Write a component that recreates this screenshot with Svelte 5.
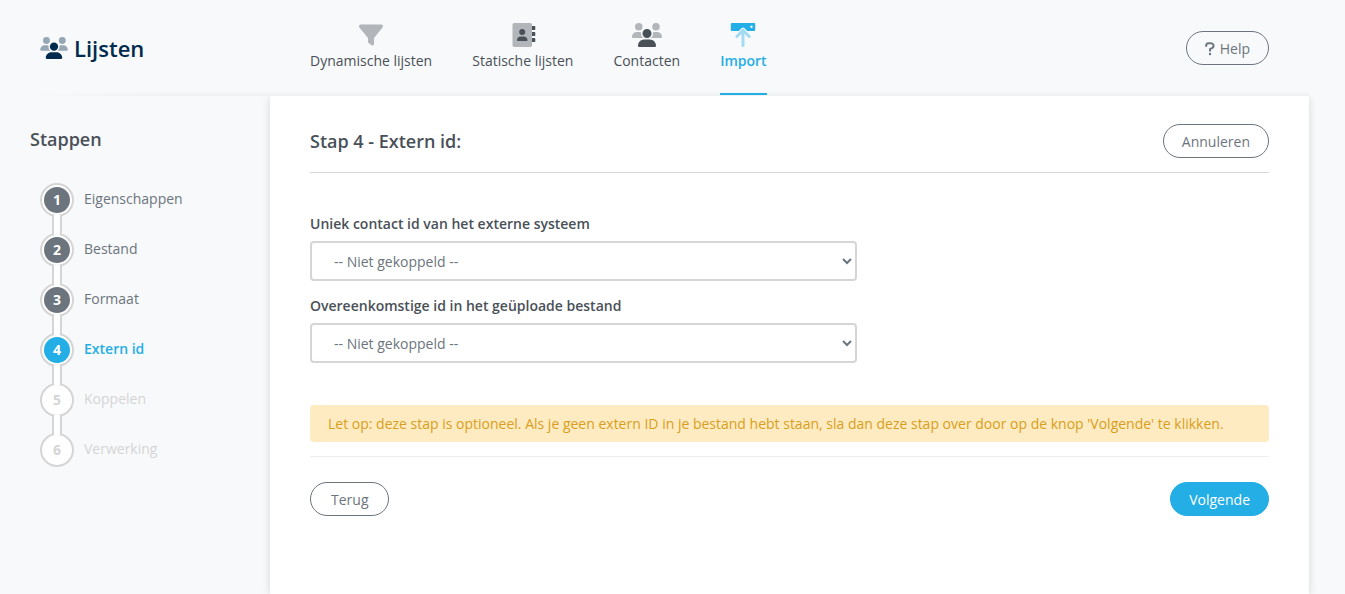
<script>
  const nav = [
    { label: 'Dynamische lijsten', icon: 'filter' },
    { label: 'Statische lijsten', icon: 'book' },
    { label: 'Contacten', icon: 'users' },
    { label: 'Import', icon: 'import', active: true },
  ];

  const steps = [
    { label: 'Eigenschappen', state: 'done' },
    { label: 'Bestand', state: 'done' },
    { label: 'Formaat', state: 'done' },
    { label: 'Extern id', state: 'current' },
    { label: 'Koppelen', state: 'todo' },
    { label: 'Verwerking', state: 'todo' },
  ];

  const fields = [
    { id: 'contact-id', label: 'Uniek contact id van het externe systeem' },
    { id: 'file-id', label: 'Overeenkomstige id in het geüploade bestand' },
  ];
</script>

{#snippet usersIcon()}
  <svg class="users" viewBox="0 0 640 512" aria-hidden="true">
    <path class="secondary" d="M144 0a80 80 0 1 1 0 160A80 80 0 1 1 144 0zM512 0a80 80 0 1 1 0 160A80 80 0 1 1 512 0zM0 298.7C0 239.8 47.8 192 106.7 192h42.7c15.9 0 31 3.5 44.6 9.7c-1.3 7.2-1.9 14.7-1.9 22.3c0 38.2 16.8 72.5 43.3 96H21.3C9.6 320 0 310.4 0 298.7zM405.3 320c26-23.5 42.7-57.8 42.7-96c0-7.6-.7-15-1.9-22.3c13.6-6.3 28.7-9.7 44.6-9.7h42.7C592.2 192 640 239.8 640 298.7c0 11.8-9.6 21.3-21.3 21.3H405.3z" />
    <path d="M224 224a96 96 0 1 1 192 0 96 96 0 1 1-192 0zM128 485.3C128 411.7 187.7 352 261.3 352H378.7C452.3 352 512 411.7 512 485.3c0 14.7-11.9 26.7-26.7 26.7H154.7c-14.7 0-26.7-11.9-26.7-26.7z" />
  </svg>
{/snippet}

<div class="page">
  <header>
    <h1>{@render usersIcon()}Lijsten</h1>
    <nav>
      {#each nav as item}
        <a href="#{item.icon}" class:active={item.active}>
          {#if item.icon === 'filter'}
            <svg viewBox="0 0 512 512" aria-hidden="true">
              <path class="secondary" d="M3.9 54.9C10.5 40.9 24.5 32 40 32H472c15.5 0 29.5 8.9 36.1 22.9s4.6 30.5-5.2 42.5L320 320.9V448c0 12.1-6.8 23.2-17.7 28.6s-23.8 4.3-33.5-3l-64-48c-8.1-6-12.8-15.5-12.8-25.6V320.9L9 97.3C-.7 85.4-2.8 68.8 3.9 54.9z" />
            </svg>
          {:else if item.icon === 'book'}
            <svg viewBox="0 0 24 24" aria-hidden="true">
              <rect class="secondary" x="1.5" y="0" width="19.5" height="24" rx="1.8" />
              <circle cx="11.2" cy="9" r="3" />
              <path d="M6 17.2a4 4 0 0 1 4-3.7h2.500a4 4 0 0 1 4 3.700a.8.8 0 0 1-.8.8H6.800a.8.8 0 0 1-.8-.8z" />
              <path d="M21 3h2.500a.8.8 0 0 1 .8.8v2.400a.8.8 0 0 1-.8.8H21zM21 9h2.500a.8.8 0 0 1 .8.8v2.400a.8.8 0 0 1-.8.8H21zM21 15h2.500a.8.8 0 0 1 .8.8v2.400a.8.8 0 0 1-.8.8H21z" />
            </svg>
          {:else if item.icon === 'users'}
            {@render usersIcon()}
          {:else}
            <svg viewBox="0 0 24 24" aria-hidden="true">
              <path fill-rule="evenodd" d="M1 0h22a1.200 1.200 0 0 1 1.200 1.200v5.600A1.200 1.200 0 0 1 23 8h-6.700l-3-2.900a1.900 1.900 0 0 0-2.600 0L7.700 8H1a1.200 1.200 0 0 1-1.200-1.200V1.200A1.200 1.200 0 0 1 1 0zM20.500 2.600a1.200 1.200 0 1 0 0 2.400a1.200 1.200 0 1 0 0-2.400z" />
              <path class="secondary arrow" d="M12 22.500V7.500M5.800 13.500L12 7.200l6.200 6.300" />
            </svg>
          {/if}
          <span>{item.label}</span>
        </a>
      {/each}
    </nav>
    <button class="pill help" type="button">
      <svg viewBox="0 0 10 14" aria-hidden="true">
        <path d="M1.200 4V3.500A2.400 2.400 0 0 1 3.600 1.200h2.500a2.500 2.500 0 0 1 1.300 4.600L5 7.200v1.600" />
        <circle cx="5" cy="12" r="1.200" />
      </svg>
      Help
    </button>
  </header>

  <div class="body">
    <aside>
      <h2>Stappen</h2>
      <ol>
        {#each steps as step, i}
          <li class={step.state}>
            <span class="dot"><b>{i + 1}</b></span>
            <span>{step.label}</span>
          </li>
        {/each}
      </ol>
    </aside>

    <main>
      <div class="title">
        <h2>Stap 4 - Extern id:</h2>
        <button class="pill" type="button">Annuleren</button>
      </div>

      <form>
        {#each fields as field}
          <label for={field.id}>{field.label}</label>
          <select id={field.id}>
            <option>-- Niet gekoppeld --</option>
          </select>
        {/each}
      </form>

      <p class="alert">
        Let op: deze stap is optioneel. Als je geen extern ID in je bestand hebt staan, sla dan deze stap over door op de knop 'Volgende' te klikken.
      </p>

      <footer>
        <button class="pill" type="button">Terug</button>
        <button class="pill primary" type="button">Volgende</button>
      </footer>
    </main>
  </div>
</div>

<style>
  :global(body) {
    margin: 0;
    background: #f8f9fb;
  }

  .page {
    display: flex;
    flex-direction: column;
    min-height: 100vh;
    overflow: hidden;
    box-sizing: border-box;
    padding-right: 36px;
    background: #f8f9fb;
    color: #495057;
    font: 14px/20px 'Open Sans', sans-serif;
  }

  h1,
  h2,
  p,
  ol {
    margin: 0;
    padding: 0;
  }

  svg {
    fill: currentColor;
  }

  .secondary {
    opacity: 0.4;
  }

  header {
    display: flex;
    box-sizing: border-box;
    height: 96px;
    padding-right: 40px;
    background:
      linear-gradient(to right, #f8f9fb 30px, transparent 180px),
      linear-gradient(to top, #eeeff0, #f8f9fb) 30px 100% / 100% 5px no-repeat;
  }

  h1 {
    display: flex;
    align-items: center;
    gap: 6px;
    box-sizing: border-box;
    width: 310px;
    padding-left: 40px;
    color: #002b4e;
    font-size: 22px;
    font-weight: 600;
    line-height: 98px;
  }

  h1 :global(svg.users) {
    width: 28px;
    height: 22px;
  }

  nav {
    display: flex;
    gap: 40px;
    margin-right: auto;
  }

  nav a {
    display: flex;
    flex-direction: column;
    align-items: center;
    gap: 4px;
    box-sizing: border-box;
    height: 95px;
    padding-top: 23px;
    color: #495057;
    text-decoration: none;
  }

  nav svg {
    width: 24px;
    height: 24px;
    overflow: visible;
  }

  nav svg.users {
    width: 30px;
  }

  nav a.active {
    border-bottom: 2px solid #24aee6;
    color: #24aee6;
    font-weight: 600;
  }

  .arrow {
    fill: none;
    stroke: currentColor;
    stroke-width: 3;
    stroke-linecap: round;
    stroke-linejoin: round;
  }

  .pill {
    box-sizing: border-box;
    height: 34px;
    padding: 2px 18px 0;
    border: 1px solid #6c757d;
    border-radius: 17px;
    background: transparent;
    color: #6c757d;
    font: inherit;
    cursor: pointer;
  }

  .help {
    display: flex;
    align-items: center;
    gap: 5px;
    margin-top: 31px;
  }

  .help svg {
    width: 10px;
    height: 14px;
  }

  .help path {
    fill: none;
    stroke: currentColor;
    stroke-width: 2;
    stroke-linecap: round;
    stroke-linejoin: round;
  }

  .body {
    display: flex;
    flex: 1;
  }

  aside {
    box-sizing: border-box;
    width: 270px;
    padding: 31px 30px 0;
  }

  h2 {
    color: #495057;
    font-size: 18px;
    font-weight: 600;
    line-height: 24px;
  }

  ol {
    display: flex;
    flex-direction: column;
    gap: 16px;
    margin-top: 32px;
    padding-left: 10px;
    list-style: none;
  }

  li {
    display: flex;
    gap: 10px;
    height: 34px;
    color: #6c757d;
    line-height: 32px;
  }

  .dot {
    position: relative;
    box-sizing: border-box;
    width: 34px;
    height: 34px;
    padding: 2px;
    border: 2px solid #d5d5d5;
    border-radius: 50%;
    background: #fff;
  }

  .dot b {
    display: block;
    border-radius: 50%;
    background: #6c757d;
    color: #fff;
    font-weight: 700;
    line-height: 26px;
    text-align: center;
  }

  /* Tube that opens into the circle above and the one below. */
  li:not(:last-child) .dot::after {
    content: '';
    position: absolute;
    top: 30px;
    left: 10px;
    width: 6px;
    height: 20px;
    border: solid #d5d5d5;
    border-width: 0 2px;
    background: #fff;
    z-index: 1;
  }

  .current {
    color: #24aee6;
    font-weight: 600;
  }

  .current b {
    background: #24aee6;
  }

  .todo {
    color: #d5d5d5;
  }

  .todo b {
    background: #fff;
    color: #d5d5d5;
  }

  main {
    flex: 1;
    min-width: 0;
    padding: 28px 40px 40px;
    background: #fff;
    box-shadow: 0 2px 8px rgba(0, 0, 0, 0.14);
    clip-path: inset(0 -12px);
  }

  .title {
    display: flex;
    align-items: flex-start;
    justify-content: space-between;
    padding-bottom: 14px;
    border-bottom: 1px solid #d5d5d5;
  }

  .title h2 {
    line-height: 34px;
  }

  form {
    display: flex;
    flex-direction: column;
    align-items: flex-start;
    margin-top: 41px;
  }

  label {
    margin-bottom: 7px;
    font-weight: 600;
  }

  select {
    box-sizing: border-box;
    width: 57%;
    height: 40px;
    margin-bottom: 15px;
    padding: 0 1px 0 18px;
    border: 2px solid #d5d5d5;
    border-radius: 4px;
    background: #fff;
    color: #6c757d;
    font: inherit;
  }

  .alert {
    margin-top: 27px;
    padding: 9px 18px 8px;
    border-radius: 4px;
    background: #feebc1;
    color: #d99e1b;
  }

  footer {
    display: flex;
    justify-content: space-between;
    margin-top: 14px;
    padding-top: 25px;
    border-top: 1px solid #eceded;
  }

  footer .pill {
    padding: 2px 20px 0;
  }

  footer .primary {
    padding: 2px 18px 0;
    border-color: #24aee6;
    background: #24aee6;
    color: #fff;
    font-weight: 500;
  }
</style>
